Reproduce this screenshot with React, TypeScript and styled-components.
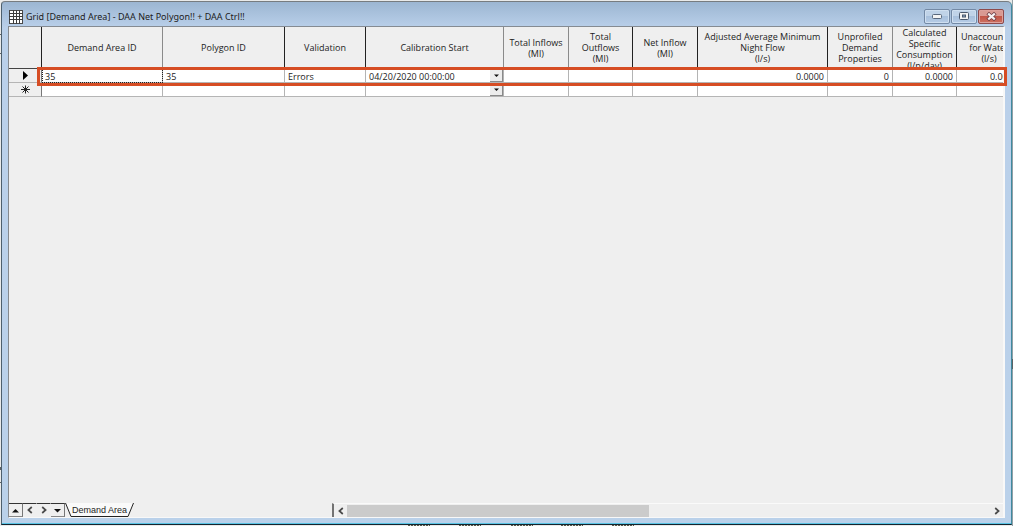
import React from "react";
import styled, { createGlobalStyle } from "styled-components";

const GlobalStyle = createGlobalStyle`
  * { box-sizing: border-box; }
  html, body { margin: 0; padding: 0; overflow: hidden; }
  body { background: #e9eaea; font-family: "Open Sans", "Noto Sans", sans-serif; color: #1c1c1c; }
  button { font: inherit; color: inherit; padding: 0; margin: 0; border: 0; background: none; border-radius: 0; }
`;

const Desktop = styled.div`
  position: relative;
  display: flex;
  height: 100vh;
  padding: 1px 0 1px 1px;
  border-right: 1px solid #93a0a6;
`;

const Smudge = styled.i<{ $x: string; $y: string; $w: number; $h: number }>`
  position: absolute;
  left: ${(p) => p.$x};
  top: ${(p) => p.$y};
  width: ${(p) => p.$w}px;
  height: ${(p) => p.$h}px;
  background: #5d6264;
`;

const Speckle = styled(Smudge)`
  background: repeating-linear-gradient(90deg, #55564a 0 2px, #d8d8cc 2px 3px);
`;

const Window = styled.section`
  flex: 1;
  min-width: 0;
  display: flex;
  flex-direction: column;
  border: 1px solid #4d5f6d;
  border-top-color: #777c80;
  border-right-color: #3f8aa0;
  border-bottom-color: #14242e;
  border-radius: 4px 5px 0 0;
  background: linear-gradient(#9cb6d2, #bad0ea 26px, #bad1ea);
  box-shadow: inset 0 -1px 0 #58c3e4;
  padding: 0 6px 6px 6px;
`;

const TitleBar = styled.header`
  height: 24px;
  flex: none;
  display: flex;
  align-items: center;
  padding: 5px 1px 0 1px;
`;

const Title = styled.h1`
  flex: 1;
  margin: 0 0 0 3px;
  font: 400 9px/14px "Noto Sans", "Open Sans", sans-serif;
  white-space: nowrap;
`;

const WindowButtons = styled.div`
  display: flex;
  gap: 1px;
`;

const WindowButton = styled.button<{ $close?: boolean }>`
  width: 26px;
  height: 15px;
  display: flex;
  align-items: center;
  justify-content: center;
  border: 1px solid ${(p) => (p.$close ? "#8d4a4c" : "#7389a5")};
  border-radius: 2px;
  box-shadow: inset 0 0 0 1px ${(p) => (p.$close ? "#dda29c" : "#cfdff0")};
  background: ${(p) =>
    p.$close
      ? "linear-gradient(#d99a92 45%, #c25647 50%, #cd7061)"
      : "linear-gradient(#c0d3e8 45%, #a8c0dc 50%, #b6cce6)"};
`;

const Panel = styled.main`
  flex: 1;
  min-height: 0;
  position: relative;
  display: flex;
  flex-direction: column;
  background: #efefef;
  border-top: 1px solid #858b92;
  border-left: 1px solid #85898e;
  border-right: 2px solid #f8f8f8;
  border-bottom: 1px solid #f8f8f8;
`;

const GridArea = styled.div`
  flex: 1;
  min-height: 0;
  overflow: hidden;
`;

const Table = styled.table`
  table-layout: fixed;
  width: 1013px;
  border-collapse: separate;
  border-spacing: 0;
  font-size: 9px;
  line-height: 11px;
`;

const HeadCell = styled.th<{ $soft?: boolean }>`
  padding: 0;
  font-weight: 400;
  border-right: 1px solid ${(p) => (p.$soft ? "#8a8a8a" : "#222")};
  border-bottom: 1px solid #444;
`;

const HeadText = styled.div`
  height: 41px;
  display: flex;
  align-items: safe center;
  justify-content: center;
  overflow: hidden;
  text-align: center;
  white-space: pre;
`;

const RowHeader = styled.th`
  height: 14px;
  padding: 0;
  border-right: 1px solid #777;
  border-bottom: 1px solid #b5b5b5;
  svg { display: block; margin: 0 auto; }
`;

const Cell = styled.td<{ $numeric?: boolean; $focused?: boolean }>`
  height: 14px;
  padding: 1px 3px 0;
  background: #fff;
  border-right: 1px solid #b4b4b4;
  border-bottom: 1px solid #b5b5b5;
  text-align: ${(p) => (p.$numeric ? "right" : "left")};
  white-space: nowrap;
  outline: ${(p) => (p.$focused ? "1px dotted #222" : "none")};
  outline-offset: -1px;
`;

const DateField = styled.div`
  display: flex;
  height: 12px;
  align-items: center;
  justify-content: space-between;
  margin-right: -3px;
`;

const DropButton = styled.button`
  width: 13px;
  height: 12px;
  display: flex;
  align-items: center;
  justify-content: center;
  background: #ededed;
  border-right: 1px solid #8a8a8a;
  border-bottom: 1px solid #8a8a8a;
`;

const Highlight = styled.div`
  position: absolute;
  left: 28px;
  right: -4px;
  top: 40px;
  height: 19px;
  border: 3px solid #d64d24;
  pointer-events: none;
`;

const Footer = styled.footer`
  flex: none;
  display: flex;
  height: 14px;
`;

const Tabs = styled.nav`
  width: 33%;
  min-width: 130px;
  margin-right: -5px;
  flex: none;
  display: flex;
`;

const NavButton = styled.button<{ $raised?: boolean }>`
  width: 14px;
  height: 14px;
  display: flex;
  align-items: center;
  justify-content: center;
  border-top: 1px solid #333;
  border-right: 1px solid ${(p) => (p.$raised ? "#777" : "transparent")};
  border-bottom: 1px solid ${(p) => (p.$raised ? "#888" : "transparent")};
`;

const SheetTab = styled.button`
  position: relative;
  width: 69px;
  height: 14px;
  font: 400 9px/12px "Liberation Sans", Arial, sans-serif;
  svg { position: absolute; left: 0; top: 0; }
  span { position: relative; }
`;

const ScrollBar = styled.div`
  flex: 1;
  display: flex;
  align-items: center;
  border-left: 2px solid #737373;
  border-top: 1px solid #fafafa;
`;

const ScrollButton = styled.button`
  width: 13px;
  height: 12px;
  flex: none;
  display: flex;
  align-items: center;
  justify-content: center;
`;

const Track = styled.div`
  flex: 1;
  height: 12px;
`;

const Thumb = styled.div`
  width: 47%;
  height: 12px;
  background: #cbcbcb;
`;

type Direction = "up" | "down" | "left" | "right";

function Triangle({ dir, size = 7 }: { dir: Direction; size?: number }) {
  const d = dir === "up" ? "M0 5.5 3.5 2 7 5.5Z" : "M0 2 7 2 3.5 5.5Z";
  return (
    <svg width={size} height={size} viewBox="0 0 7 7" aria-hidden="true">
      <path d={d} fill="#111" />
    </svg>
  );
}

function Chevron({ dir }: { dir: Direction }) {
  return (
    <svg width="6" height="8" viewBox="0 0 6 8" aria-hidden="true">
      <path d={dir === "left" ? "M4.8 1 1.4 4 4.8 7" : "M1.2 1 4.6 4 1.2 7"} fill="none" stroke="#4a4a4a" strokeWidth="1.7" />
    </svg>
  );
}

interface Column {
  label: string;
  width: number;
  value: string;
  numeric?: boolean;
  picker?: boolean;
  soft?: boolean;
}

const columns: Column[] = [
  { label: "Demand Area ID", width: 121, value: "35", soft: true },
  { label: "Polygon ID", width: 122, value: "35" },
  { label: "Validation", width: 81, value: "Errors" },
  { label: "Calibration Start", width: 138, value: "04/20/2020 00:00:00", picker: true, soft: true },
  { label: "Total Inflows\n(Ml)", width: 65, value: "", soft: true },
  { label: "Total\nOutflows\n(Ml)", width: 64, value: "" },
  { label: "Net Inflow\n(Ml)", width: 65, value: "" },
  { label: "Adjusted Average Minimum\nNight Flow\n(l/s)", width: 130, value: "0.0000", numeric: true },
  { label: "Unprofiled\nDemand\nProperties", width: 65, value: "0", numeric: true, soft: true },
  { label: "Calculated\nSpecific\nConsumption\n(l/p/day)", width: 64, value: "0.0000", numeric: true },
  { label: "Unaccounted\nfor Water\n(l/s)", width: 65, value: "0.0000", numeric: true },
];

function GridRow({ empty }: { empty?: boolean }) {
  return (
    <tr>
      <RowHeader scope="row" aria-label={empty ? "New row" : "Current row"}>
        {empty ? (
          <svg width="9" height="9" viewBox="0 0 9 9" aria-hidden="true">
            <path d="M4.5 0.5V8.5M0 4.5H9M1.5 1.5 7.5 7.5M7.5 1.5 1.5 7.5" stroke="#222" strokeWidth="1" />
          </svg>
        ) : (
          <svg width="5" height="9" viewBox="0 0 5 9" aria-hidden="true">
            <path d="M0 0 5 4.5 0 9Z" fill="#000" />
          </svg>
        )}
      </RowHeader>
      {columns.map((c, i) => {
        const text = empty ? "" : c.value;
        return (
          <Cell key={c.label} $numeric={c.numeric} $focused={!empty && i === 0}>
            {c.picker ? (
              <DateField>
                <span>{text}</span>
                <DropButton type="button" aria-label="Choose date">
                  <Triangle dir="down" size={5} />
                </DropButton>
              </DateField>
            ) : (
              text
            )}
          </Cell>
        );
      })}
    </tr>
  );
}

export default function App() {
  return (
    <>
      <GlobalStyle />
      <Desktop>
        <Smudge $x="0" $y="34px" $w={1} $h={1} />
        <Smudge $x="0" $y="53px" $w={1} $h={1} />
        <Smudge $x="0" $y="467px" $w={1} $h={3} />
        <Smudge $x="0" $y="482px" $w={1} $h={1} />
        <Smudge $x="100%" $y="359px" $w={1} $h={10} />
        {[408, 459, 511, 561, 612].map((x) => (
          <Speckle key={x} $x={`${x}px`} $y="calc(100% - 1px)" $w={22} $h={1} />
        ))}
        <Window>
          <TitleBar>
            <svg width="14" height="14" viewBox="0 0 14 14" aria-hidden="true">
              <rect x="0.5" y="0.5" width="13" height="13" fill="#fff" stroke="#4a4a4a" />
              <path d="M0 3.5H14M0 6.5H14M0 9.5H14M4.5 0V14M7.5 0V14M10.5 0V14" stroke="#3c3c3c" />
            </svg>
            <Title>Grid [Demand Area] - DAA Net Polygon!! + DAA Ctrl!!</Title>
            <WindowButtons>
              <WindowButton type="button" aria-label="Minimize">
                <svg width="10" height="5" viewBox="0 0 10 5" aria-hidden="true">
                  <rect x="0.5" y="0.5" width="9" height="4" rx="1" fill="#f4f4f4" stroke="#59687d" />
                </svg>
              </WindowButton>
              <WindowButton type="button" aria-label="Restore">
                <svg width="10" height="9" viewBox="0 0 10 9" aria-hidden="true">
                  <rect x="0.5" y="0.5" width="9" height="7" rx="1" fill="#f4f4f4" stroke="#4b596d" />
                  <rect x="3.5" y="3" width="3" height="2" fill="#8fa9c8" stroke="#4b596d" />
                </svg>
              </WindowButton>
              <WindowButton type="button" aria-label="Close" $close>
                <svg width="11" height="9" viewBox="0 0 10 8" aria-hidden="true">
                  <path d="M1.5 1 8.5 7M8.5 1 1.5 7" stroke="#6b3a40" strokeWidth="3.4" />
                  <path d="M2 1.4 8 6.6M8 1.4 2 6.6" stroke="#f6f2f2" strokeWidth="2" />
                </svg>
              </WindowButton>
            </WindowButtons>
          </TitleBar>
          <Panel>
            <GridArea>
              <Table>
                <colgroup>
                  <col width={33} />
                  {columns.map((c) => (
                    <col key={c.label} width={c.width} />
                  ))}
                </colgroup>
                <thead>
                  <tr>
                    <HeadCell aria-label="Row" />
                    {columns.map((c) => (
                      <HeadCell key={c.label} scope="col" $soft={c.soft}>
                        <HeadText>{c.label}</HeadText>
                      </HeadCell>
                    ))}
                  </tr>
                </thead>
                <tbody>
                  <GridRow />
                  <GridRow empty />
                </tbody>
              </Table>
            </GridArea>
            <Highlight />
            <Footer>
              <Tabs aria-label="Sheets">
                <NavButton type="button" aria-label="First sheet" $raised><Triangle dir="up" /></NavButton>
                <NavButton type="button" aria-label="Previous sheet"><Chevron dir="left" /></NavButton>
                <NavButton type="button" aria-label="Next sheet"><Chevron dir="right" /></NavButton>
                <NavButton type="button" aria-label="Last sheet" $raised><Triangle dir="down" /></NavButton>
                <SheetTab type="button">
                  <svg width="69" height="14" viewBox="0 0 69 14" aria-hidden="true">
                    <path d="M0.5 0 6 13.5H63L68.5 0" fill="#fafafa" stroke="#222" />
                  </svg>
                  <span>Demand Area</span>
                </SheetTab>
              </Tabs>
              <ScrollBar>
                <ScrollButton type="button" aria-label="Scroll left"><Chevron dir="left" /></ScrollButton>
                <Track><Thumb /></Track>
                <ScrollButton type="button" aria-label="Scroll right"><Chevron dir="right" /></ScrollButton>
              </ScrollBar>
            </Footer>
          </Panel>
        </Window>
      </Desktop>
    </>
  );
}
